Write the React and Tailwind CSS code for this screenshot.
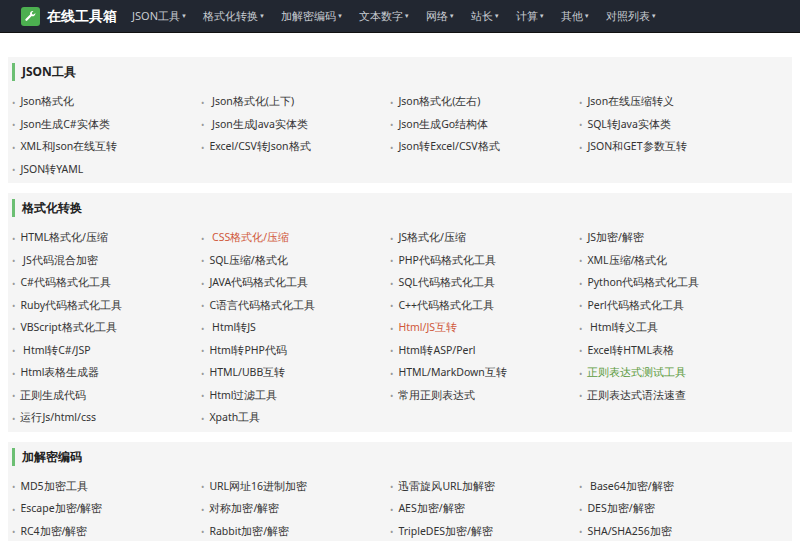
import React from 'react';

const nav = ['JSON工具', '格式化转换', '加解密编码', '文本数字', '网络', '站长', '计算', '其他', '对照列表'];

const sections = [
  {
    title: 'JSON工具',
    items: [
      'Json格式化', ' Json格式化(上下)', 'Json格式化(左右)', 'Json在线压缩转义',
      'Json生成C#实体类', ' Json生成Java实体类', 'Json生成Go结构体', 'SQL转Java实体类',
      'XML和Json在线互转', 'Excel/CSV转Json格式', 'Json转Excel/CSV格式', 'JSON和GET参数互转',
      'JSON转YAML',
    ],
  },
  {
    title: '格式化转换',
    items: [
      'HTML格式化/压缩', { t: ' CSS格式化/压缩', c: 'text-[#d0583a]' }, 'JS格式化/压缩', 'JS加密/解密',
      ' JS代码混合加密', 'SQL压缩/格式化', 'PHP代码格式化工具', 'XML压缩/格式化',
      'C#代码格式化工具', 'JAVA代码格式化工具', 'SQL代码格式化工具', 'Python代码格式化工具',
      'Ruby代码格式化工具', 'C语言代码格式化工具', 'C++代码格式化工具', 'Perl代码格式化工具',
      'VBScript格式化工具', ' Html转JS', { t: 'Html/JS互转', c: 'text-[#d0583a]' }, ' Html转义工具',
      ' Html转C#/JSP', 'Html转PHP代码', 'Html转ASP/Perl', 'Excel转HTML表格',
      'Html表格生成器', 'HTML/UBB互转', 'HTML/MarkDown互转', { t: '正则表达式测试工具', c: 'text-[#5a9a3c]' },
      '正则生成代码', 'Html过滤工具', '常用正则表达式', '正则表达式语法速查',
      '运行Js/html/css', 'Xpath工具',
    ],
  },
  {
    title: '加解密编码',
    items: [
      'MD5加密工具', 'URL网址16进制加密', '迅雷旋风URL加解密', ' Base64加密/解密',
      'Escape加密/解密', '对称加密/解密', 'AES加密/解密', 'DES加密/解密',
      'RC4加密/解密', 'Rabbit加密/解密', 'TripleDES加密/解密', 'SHA/SHA256加密',
    ],
  },
];

function Item({ item }) {
  const text = typeof item === 'string' ? item : item.t;
  const color = typeof item === 'string' ? 'text-[#333]' : item.c;
  return (
    <div className="flex h-[22.5px] items-center whitespace-pre">
      <span className="mr-[5px] text-[9px] text-[#999]">•</span>
      <span className={color}>{text}</span>
    </div>
  );
}

export default function App() {
  return (
    <div className="min-h-[541px] bg-white font-['Noto_Sans_CJK_SC',sans-serif] text-[10.5px]">
      <header className="flex h-[33px] items-center border-b border-[#111] bg-[#222731] pl-[21px]">
        <div className="flex h-[19px] w-[19px] items-center justify-center rounded-[3px] bg-[#4caf50]">
          <svg viewBox="0 0 24 24" className="h-[13px] w-[13px]" fill="white">
            <path d="M21 6.5a5 5 0 0 1-6.7 4.7L6 19.5a2 2 0 0 1-3-3l8.3-8.3A5 5 0 0 1 17.5 2l-3 3 .5 3 3 .5 3-3z" />
          </svg>
        </div>
        <span className="ml-[7px] mr-[15px] text-[13.5px] font-bold text-white">在线工具箱</span>
        <nav className="flex gap-[16px] text-[11px] text-[#c8ccd2]">
          {nav.map((n) => (
            <span key={n} className="flex items-center">
              {n}
              <span className="ml-[1px] text-[6px]">▼</span>
            </span>
          ))}
        </nav>
      </header>
      <main className="flex flex-col gap-[10px] px-[8px] pt-[24px]">
        {sections.map((s) => (
          <section key={s.title} className="bg-[#f5f5f5] px-[4px] pb-[2px] pt-[6px]">
            <div className="flex h-[18px] items-center border-l-[3px] border-[#6cbf73] pl-[7px] text-[12px] font-bold text-[#222]">
              {s.title}
            </div>
            <div className="mt-[10px] grid grid-cols-[repeat(4,189px)]">
              {s.items.map((it, i) => (
                <Item key={i} item={it} />
              ))}
            </div>
          </section>
        ))}
      </main>
    </div>
  );
}
